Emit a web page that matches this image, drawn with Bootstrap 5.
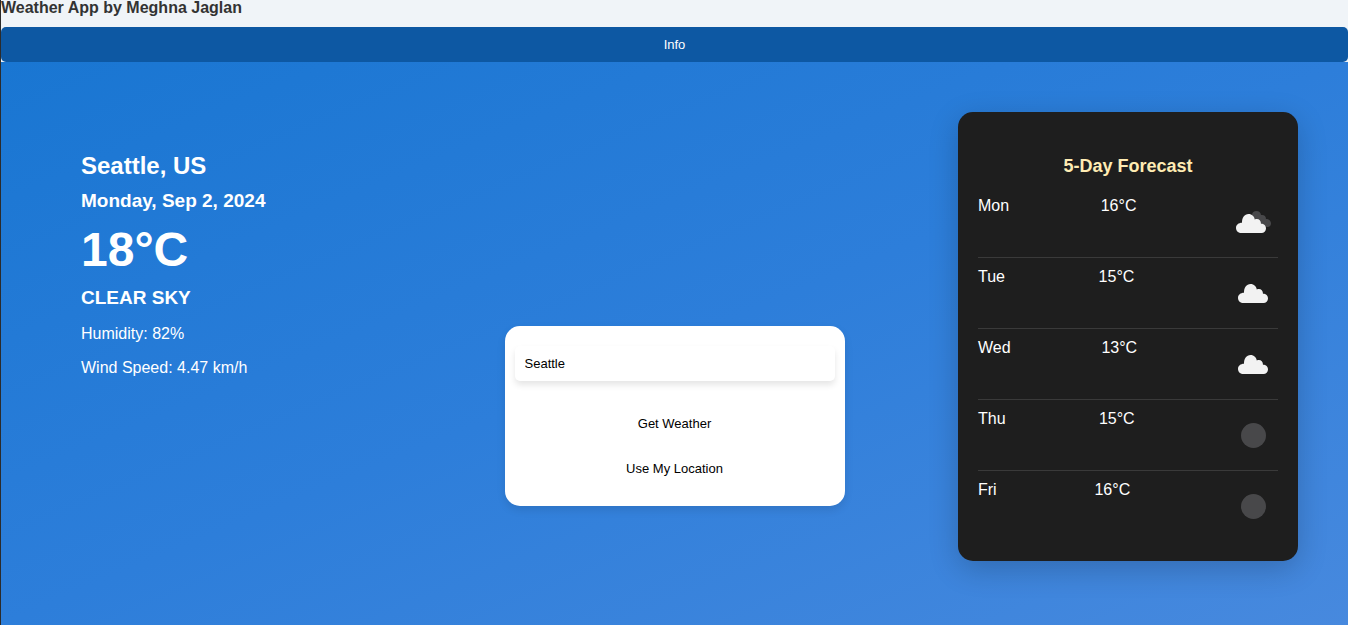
<!DOCTYPE html>
<html lang="en">
<head>
<meta charset="utf-8">
<meta name="viewport" content="width=device-width, initial-scale=1">
<title>Weather App</title>
<link href="https://cdn.jsdelivr.net/npm/bootstrap@5.3.0/dist/css/bootstrap.min.css" rel="stylesheet">
<style>
  body {
    font-family: "Liberation Sans", Arial, sans-serif;
    font-size: 16px;
    line-height: 18px;
    color: #333;
    background: #f0f4f8;
    border-left: 1px solid #2b2b2b;
  }
  .app-title { font-size: 16px; line-height: 16px; padding-bottom: 11px; }
  .app-btn, .city-input { font-size: 13px; line-height: 15px; padding: 10px; border: 0; border-radius: 5px; }
  .info-btn, .info-btn:hover { background: #0d58a3; color: #fff; }
  .weather-main {
    padding: 50px;
    background: linear-gradient(to bottom right, #1976d2, #2d7eda 50%, #4789de);
    color: #fff;
  }
  .panel { width: 340px; border-radius: 15px; }
  .current { padding: 40px 30px; }
  .city-name { font-size: 24px; line-height: 28px; margin-bottom: 10px; }
  .sub-title { font-size: 19px; line-height: 22px; margin-bottom: 10px; }
  .temp-now { font-size: 48px; line-height: 55px; margin-bottom: 10px; }
  .current p { margin-bottom: 16px; }
  .search-panel { background: #fff; padding: 20px 10px; margin-top: 214px; box-shadow: 0 4px 8px rgba(0,0,0,.1); }
  .city-input { color: #000; background: #fff; margin-bottom: 25px; box-shadow: 0 4px 6px rgba(0,0,0,.1); }
  .search-panel .app-btn { color: #000; background: #fff; }
  .search-panel .app-btn + .app-btn { margin-top: 10px; }
  .forecast { background: #1e1e1e; padding: 20px; box-shadow: 0 8px 30px rgba(0,0,0,.2); }
  .forecast-title { font-size: 18px; line-height: 21px; margin: 24px 0 10px; color: #ffecb3; }
  .forecast-day { padding: 10px 0; border-bottom: 1px solid #3a3a3a; }
  .forecast-day:last-child { border-bottom: 0; }
  .forecast-day svg { width: 50px; height: 50px; }
</style>
</head>
<body class="d-flex flex-column min-vh-100">
<header>
  <h1 class="app-title fw-bold mb-0">Weather App by Meghna Jaglan</h1>
  <button type="button" class="app-btn info-btn d-block w-100">Info</button>
</header>
<main class="weather-main flex-grow-1 d-flex flex-wrap justify-content-between align-items-start">
  <section class="panel current">
    <h2 class="city-name fw-bold">Seattle, US</h2>
    <h3 class="sub-title fw-bold">Monday, Sep 2, 2024</h3>
    <div class="temp-now fw-bold">18°C</div>
    <h3 class="sub-title fw-bold text-uppercase mb-3">Clear sky</h3>
    <p>Humidity: 82%</p>
    <p>Wind Speed: 4.47 km/h</p>
  </section>
  <form class="panel search-panel d-flex flex-column">
    <input type="text" class="city-input" aria-label="City" value="Seattle">
    <button type="button" class="app-btn">Get Weather</button>
    <button type="button" class="app-btn">Use My Location</button>
  </form>
  <section class="panel forecast">
    <h3 class="forecast-title fw-bold text-center">5-Day Forecast</h3>
    <div>
      <div class="forecast-day d-flex justify-content-between">
        <span>Mon</span><span>16°C</span>
        <svg viewBox="0 0 50 50" aria-hidden="true">
          <path fill="#48484a" d="M24 18C24 15.500 26 14 28.500 14C31 14 32.500 15.500 33 18C36 17.500 38 19 38 22C41 22 43 24 43 26.500C43 29 41 30.500 39 30L30 27Z"/>
          <use href="#cloud" x="-2" y="1"/>
        </svg>
      </div>
      <div class="forecast-day d-flex justify-content-between">
        <span>Tue</span><span>15°C</span>
        <svg viewBox="0 0 50 50" aria-hidden="true">
          <path id="cloud" fill="#f2f2f2" d="M15.500 35C12.500 35 10 33 10 30C10 27 12.500 24.800 16 24.800C15.800 19.500 18.500 16 22.500 16C26 16 28.500 18.500 28.800 21.500C32 20 35 22 35 25.800C38 25.800 40 27.800 40 30.500C40 33.200 38 35 35.500 35Z"/>
        </svg>
      </div>
      <div class="forecast-day d-flex justify-content-between">
        <span>Wed</span><span>13°C</span>
        <svg viewBox="0 0 50 50" aria-hidden="true"><use href="#cloud"/></svg>
      </div>
      <div class="forecast-day d-flex justify-content-between">
        <span>Thu</span><span>15°C</span>
        <svg viewBox="0 0 50 50" aria-hidden="true"><circle cx="25.500" cy="25.500" r="12.500" fill="#48484a"/></svg>
      </div>
      <div class="forecast-day d-flex justify-content-between">
        <span>Fri</span><span>16°C</span>
        <svg viewBox="0 0 50 50" aria-hidden="true"><circle cx="25.500" cy="25.500" r="12.500" fill="#48484a"/></svg>
      </div>
    </div>
  </section>
</main>
<script src="https://cdn.jsdelivr.net/npm/bootstrap@5.3.0/dist/js/bootstrap.bundle.min.js"></script>
</body>
</html>
